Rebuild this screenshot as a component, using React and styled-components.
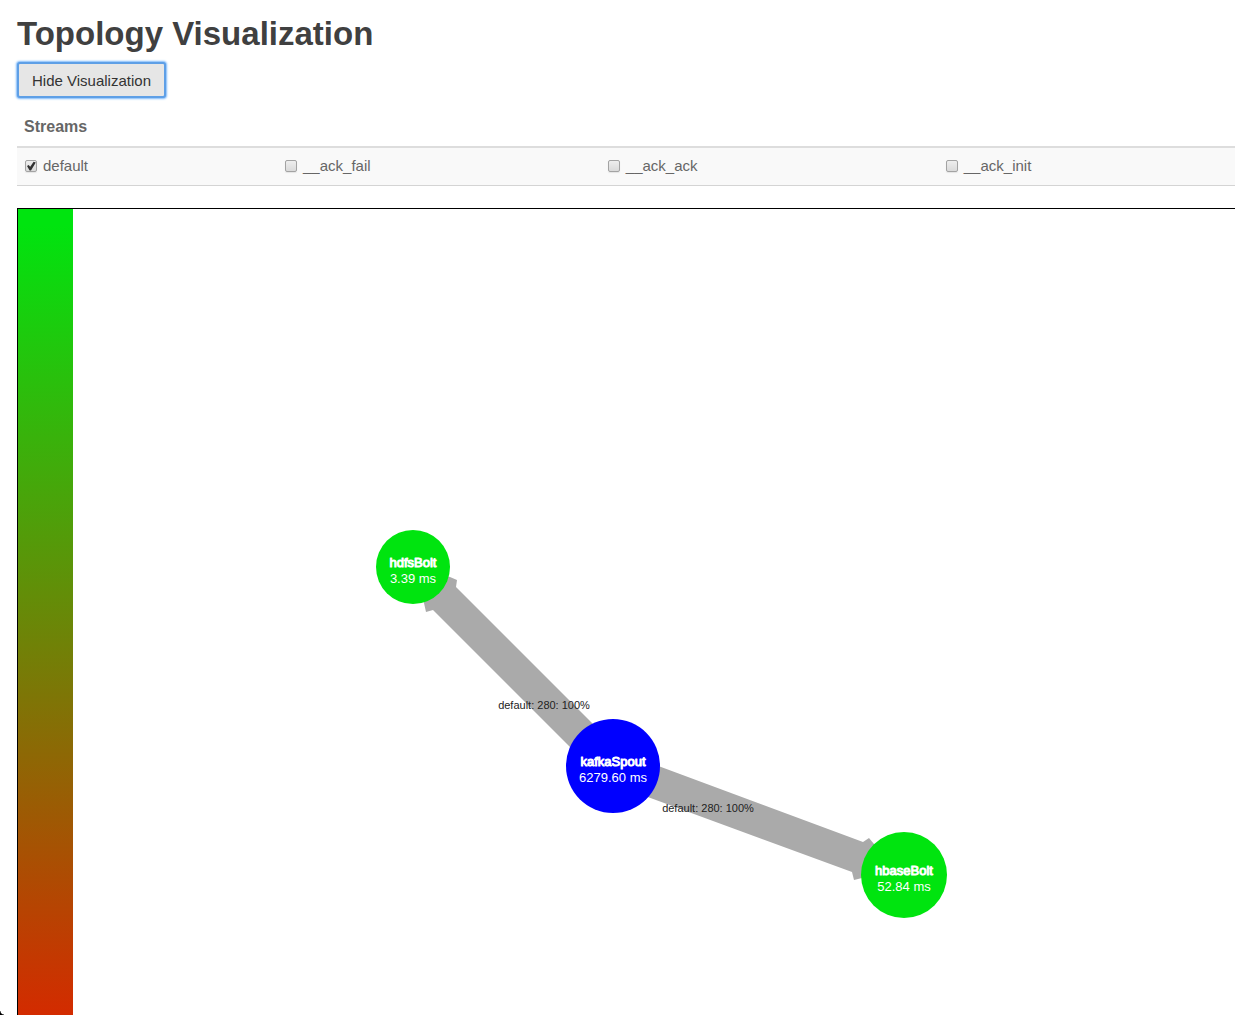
import React, { useState } from "react";
import styled, { createGlobalStyle } from "styled-components";

const GlobalStyle = createGlobalStyle`
  * { box-sizing: border-box; }
  body {
    margin: 0;
    background: #fff;
    color: #666;
    font-family: "Liberation Sans", Arial, sans-serif;
    font-size: 15px;
    line-height: 22px;
  }
`;

const Page = styled.main`
  display: flex;
  flex-direction: column;
  align-items: flex-start;
  height: 100vh;
  padding: 12px 0 0 17px;
  overflow: hidden;
`;

const Title = styled.h1`
  margin: 0 0 6px;
  color: #404040;
  font-size: 33px;
  line-height: 44px;
`;

const ToggleButton = styled.button`
  flex: none;
  height: 36px;
  padding: 2px 13px 0;
  border: 2px solid #5e9fe6;
  border-radius: 3px;
  box-shadow: 0 0 2px 1px #7db9fa;
  background: #e6e6e6;
  color: #333;
  font: inherit;
  outline: none;
`;

const StreamTable = styled.table`
  flex: none;
  width: 100%;
  margin: 10px 0 22px;
  border-collapse: collapse;
  table-layout: fixed;
`;

const StreamHeading = styled.th`
  width: ${(p) => p.$width};
  height: 39px;
  padding: 0 7px;
  border-bottom: 2px solid #ddd;
  font-size: 16px;
  text-align: left;
`;

const StreamCell = styled.td`
  height: 38px;
  padding: 0 7px;
  border-bottom: 1px solid #d4d4d4;
  background: #f9f9f9;
`;

const StreamLabel = styled.label`
  display: flex;
  align-items: center;
  gap: 6px;
`;

const Tick = styled.input`
  flex: none;
  display: grid;
  place-items: center;
  width: 12px;
  height: 12px;
  margin: 0 0 0 1px;
  appearance: none;
  border: 1px solid #a3a3a3;
  border-radius: 2px;
  background: linear-gradient(#eee, #dadada);
  box-shadow: 0 1px 1px #e4e4e4;

  &:checked::before {
    content: "";
    width: 10px;
    height: 10px;
    background: #333;
    clip-path: polygon(10% 48%, 26% 38%, 42% 56%, 76% 4%, 98% 12%, 50% 92%, 36% 92%);
  }
`;

const Stage = styled.section`
  display: flex;
  flex: 1;
  align-self: stretch;
  min-height: 0;
  border: solid #000;
  border-width: 1px 0 0 1px;
`;

const HeatBar = styled.div`
  flex: none;
  width: 55px;
  background: linear-gradient(#00e40f 0%, #00e40f 2%, #d32b00 100%);
`;

const Graph = styled.svg`
  flex: 1;
  min-width: 0;
  height: 100%;
  font-family: "Liberation Sans", Arial, sans-serif;
  text-anchor: middle;
`;

const Edge = styled.polygon`
  fill: #aaa;
`;

const NodeText = styled.text`
  fill: #fff;
  font-size: 13px;
  stroke: #fff;
  stroke-width: ${(p) => (p.$strong ? "1px" : "0")};
  stroke-linejoin: round;
`;

const EdgeText = styled.text`
  fill: #222;
  font-size: 11px;
`;

const WindowCorner = styled.span`
  position: fixed;
  bottom: 0;
  left: 0;
  width: 4px;
  height: 4px;
  background: radial-gradient(circle at 100% 0, transparent 3px, #000 4px);
`;

const streams = [
  { name: "default", width: "21.35%", on: true },
  { name: "__ack_fail", width: "26.5%" },
  { name: "__ack_ack", width: "27.75%" },
  { name: "__ack_init", width: "24.4%" },
];

const nodes = [
  { name: "hdfsBolt", latency: "3.39 ms", x: 340, y: 358, r: 37, fill: "#00e40f" },
  { name: "kafkaSpout", latency: "6279.60 ms", x: 540, y: 557, r: 47, fill: "#00f" },
  { name: "hbaseBolt", latency: "52.84 ms", x: 831, y: 666, r: 43, fill: "#00e40f" },
];

const edges = [
  {
    points: "340,358 377,368 384,371 383,378 551,546 528,569 360,401 353,403 351,394",
    x: 471,
    y: 500,
    label: "default: 280: 100%",
  },
  {
    points: "831,666 801,635 796,629 790,633 545,542 534,573 779,663 781,671 789,669",
    x: 635,
    y: 603,
    label: "default: 280: 100%",
  },
];

export default function App() {
  const [visible, setVisible] = useState(true);
  return (
    <>
      <GlobalStyle />
      <Page>
        <Title>Topology Visualization</Title>
        <ToggleButton type="button" onClick={() => setVisible(!visible)}>
          {visible ? "Hide" : "Show"} Visualization
        </ToggleButton>
        {visible && (
          <>
            <StreamTable>
              <thead>
                <tr>
                  {streams.map((s, i) => (
                    <StreamHeading key={s.name} $width={s.width}>
                      {i === 0 ? "Streams" : null}
                    </StreamHeading>
                  ))}
                </tr>
              </thead>
              <tbody>
                <tr>
                  {streams.map((s) => (
                    <StreamCell key={s.name}>
                      <StreamLabel>
                        <Tick type="checkbox" defaultChecked={s.on} />
                        {s.name}
                      </StreamLabel>
                    </StreamCell>
                  ))}
                </tr>
              </tbody>
            </StreamTable>
            <Stage>
              <HeatBar />
              <Graph>
                {edges.map((e) => (
                  <Edge key={e.points} points={e.points} />
                ))}
                {nodes.map((n) => (
                  <g key={n.name}>
                    <circle cx={n.x} cy={n.y} r={n.r} fill={n.fill} />
                    <NodeText $strong x={n.x} y={n.y}>{n.name}</NodeText>
                    <NodeText x={n.x} y={n.y + 16}>{n.latency}</NodeText>
                  </g>
                ))}
                {edges.map((e) => (
                  <EdgeText key={e.points} x={e.x} y={e.y}>{e.label}</EdgeText>
                ))}
              </Graph>
            </Stage>
          </>
        )}
        <WindowCorner />
      </Page>
    </>
  );
}
